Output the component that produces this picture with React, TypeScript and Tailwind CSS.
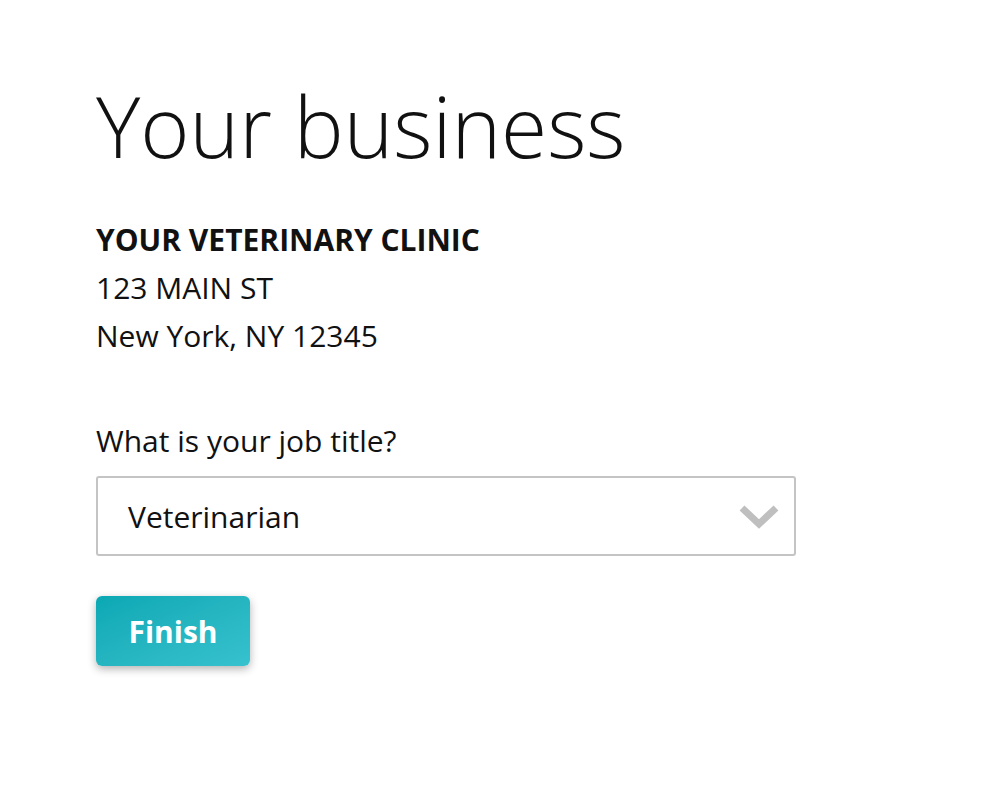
export default function App() {
  return (
    <div
      className="min-h-screen bg-white text-[#111] pl-[96px] pt-[76px]"
      style={{ fontFamily: '"Open Sans", sans-serif' }}
    >
      <h1 className="text-[84px] font-light leading-[100px]">Your business</h1>

      <div className="mt-[40px] text-[30px] leading-[48px]">
        <div className="font-bold">YOUR VETERINARY CLINIC</div>
        <div>123 MAIN ST</div>
        <div>New York, NY 12345</div>
      </div>

      <div className="mt-[61px] text-[30px] leading-[40px]">What is your job title?</div>

      <div className="mt-[15px] w-[700px] h-[80px] rounded-[3px] border-2 border-[#c4c4c4] flex items-center justify-between pl-[30px] pr-[14px]">
        <span className="text-[30px]">Veterinarian</span>
        <svg width="42" height="28" viewBox="0 0 42 28" fill="none">
          <path d="M4 6 L21 22 L38 6" stroke="#bfbfbf" strokeWidth="7" strokeLinejoin="miter" />
        </svg>
      </div>

      <button className="mt-[40px] w-[154px] h-[70px] rounded-[6px] bg-gradient-to-br from-[#08a8b4] to-[#36c2ce] text-white text-[30px] font-bold shadow-[0_3px_8px_rgba(0,0,0,0.3)]">
        Finish
      </button>
    </div>
  );
}
